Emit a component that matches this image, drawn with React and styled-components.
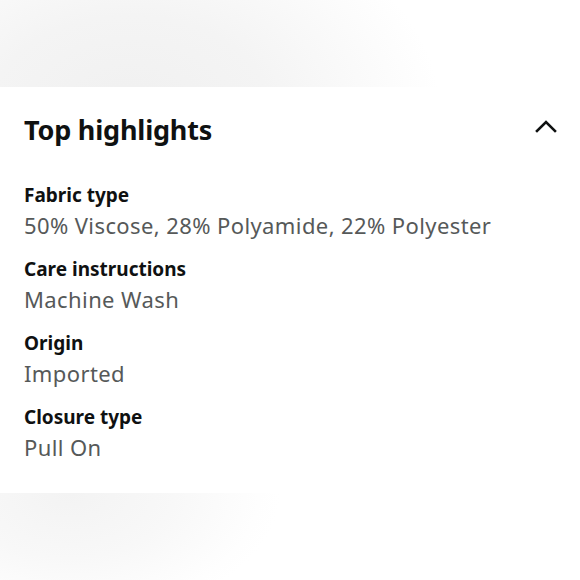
import styled, { createGlobalStyle } from "styled-components";

const Global = createGlobalStyle`
  html, body {
    margin: 0;
    padding: 0;
    background: #ffffff;
  }
  body {
    font-family: "Noto Sans", "Open Sans", Arial, sans-serif;
  }
`;

const highlights = [
  { label: "Fabric type", value: "50% Viscose, 28% Polyamide, 22% Polyester" },
  { label: "Care instructions", value: "Machine Wash" },
  { label: "Origin", value: "Imported" },
  { label: "Closure type", value: "Pull On" },
];

const Page = () => {
  return (
    <Wrapper>
      <Global />
      {/* faded band above */}
      <Band $top />
      <Panel>
        <Header>
          <Title>Top highlights</Title>
          <Chevron viewBox="0 0 22 14" aria-hidden="true">
            <path d="M2 12 L11 3 L20 12" />
          </Chevron>
        </Header>
        <List>
          {highlights.map((h) => (
            <Item key={h.label}>
              <Label>{h.label}</Label>
              <Value>{h.value}</Value>
            </Item>
          ))}
        </List>
      </Panel>
      {/* faded band below */}
      <Band />
    </Wrapper>
  );
};

const Wrapper = styled.div`
  width: 580px;
  height: 580px;
  display: flex;
  flex-direction: column;
  overflow: hidden;
`;

const Band = styled.div`
  flex: ${(p) => (p.$top ? "0 0 87px" : "1 1 auto")};
  background: ${(p) =>
    p.$top
      ? "radial-gradient(ellipse 310px 210px at 130px 110px, #f0f0f0 0%, #f4f4f4 45%, #fbfbfb 80%, #ffffff 100%)"
      : "radial-gradient(ellipse 210px 130px at 70px 0px, #f3f3f3 0%, #f8f8f8 50%, #fefefe 90%, #ffffff 100%)"};
`;

const Panel = styled.section`
  background: #ffffff;
  padding: 22px 22px 30px 24px;
  display: flex;
  flex-direction: column;
`;

const Header = styled.div`
  display: flex;
  align-items: center;
  justify-content: space-between;
  height: 40px;
  margin-bottom: 32px;
`;

const Title = styled.h2`
  margin: 0;
  font-size: 27px;
  font-weight: 700;
  color: #0f1111;
  letter-spacing: -0.2px;
`;

const Chevron = styled.svg`
  width: 22px;
  height: 14px;
  margin-right: 1px;
  margin-top: -6px;
  fill: none;
  stroke: #0f1111;
  stroke-width: 2.6;
  stroke-linecap: square;
`;

const List = styled.div`
  display: flex;
  flex-direction: column;
  gap: 14px;
`;

const Item = styled.div`
  display: flex;
  flex-direction: column;
`;

const Label = styled.div`
  font-size: 19px;
  font-weight: 700;
  line-height: 28px;
  color: #0f1111;
`;

const Value = styled.div`
  font-size: 22px;
  line-height: 32px;
  letter-spacing: 0.4px;
  color: #565959;
`;

export default function App() {
  return <Page />;
}
